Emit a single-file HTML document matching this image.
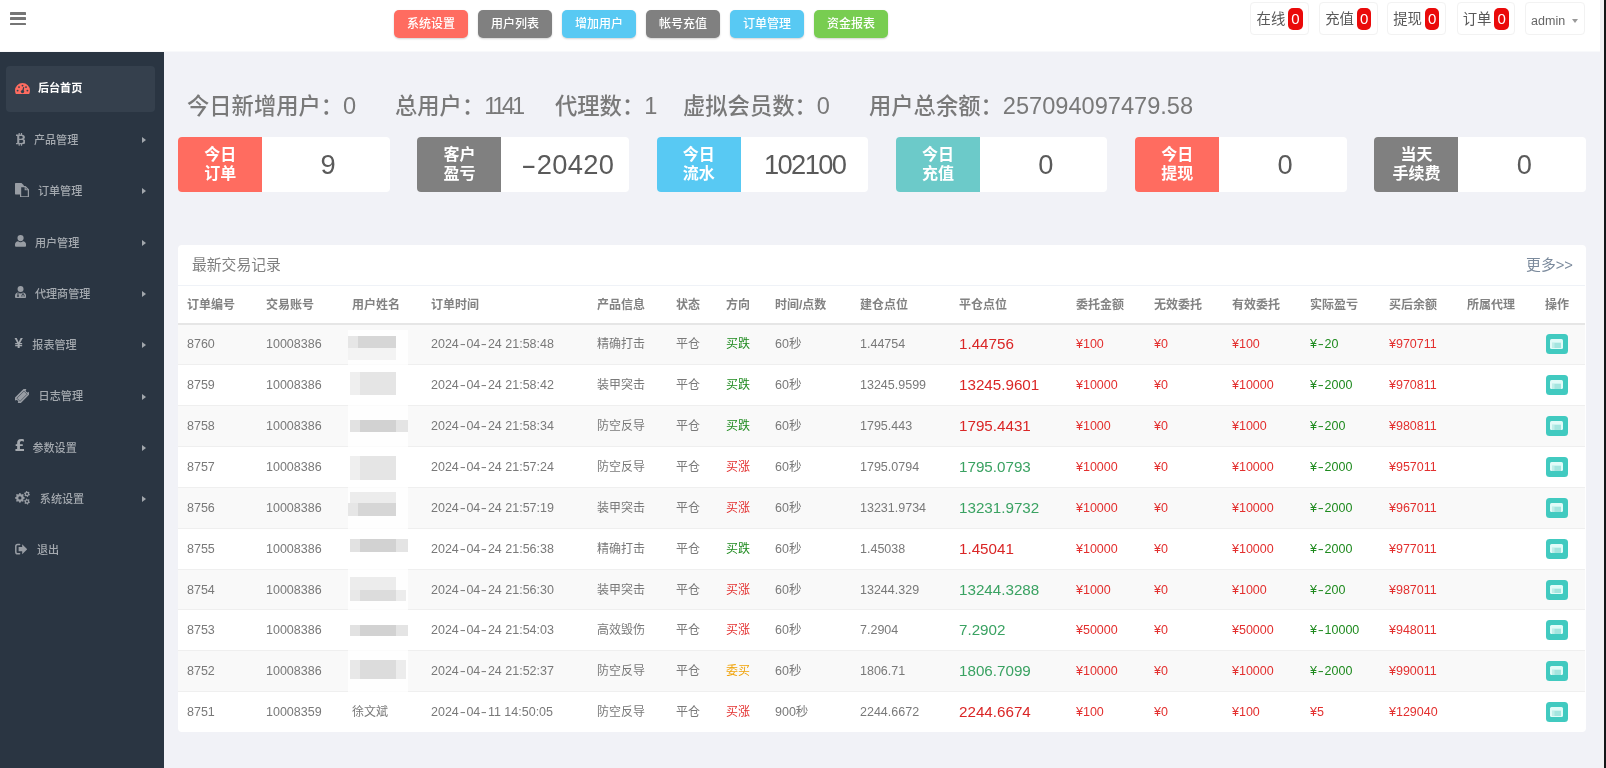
<!DOCTYPE html>
<html lang="zh-CN">
<head>
<meta charset="utf-8">
<title>后台首页</title>
<style>
*{box-sizing:border-box;margin:0;padding:0}
html,body{width:1606px;height:768px;overflow:hidden}
body{position:relative;background:#f1f2f7;font-family:"Liberation Sans","Noto Sans CJK SC",sans-serif;color:#797979;font-size:12px}
#wrap{position:absolute;left:0;top:0;width:1606px;height:768px;will-change:transform;transform:translateZ(0)}
/* header */
#header{position:absolute;left:0;top:0;width:1600px;height:52px;background:linear-gradient(#fff 0,#fff 51px,#f8f9fb 51px,#f8f9fb 52px)}
#burger{position:absolute;left:10.2px;top:12px;width:16px;height:14px}
#burger i{position:absolute;left:0;width:16px;height:2.5px;background:#757575;border-radius:.6px}
.tbtn{position:absolute;top:10px;height:27.5px;width:74.6px;margin-left:.6px;border-radius:5px;color:#fff;font-size:12px;font-weight:500;line-height:28.6px;text-align:center;box-shadow:0 1px 2px rgba(0,0,0,.18)}
.b-red{background:#ff6c60}.b-gray{background:#808080}.b-blue{background:#58c9f3}.b-green{background:#78cd51}.b-teal{background:#6ccac9}
.nbtn{position:absolute;top:2.3px;height:33px;border:1px solid #f2f2f2;border-radius:4px;background:#fff;color:#595959;font-size:14.4px;line-height:32.4px;padding-left:5.2px;white-space:nowrap}
.nbtn b{position:absolute;left:36.9px;top:5.2px;font-weight:normal;background:#ea0a0a;color:#fff;border-radius:5px;width:14.4px;height:21.2px;line-height:21.2px;text-align:center;font-size:15px}
/* sidebar */
#side{position:absolute;left:0;top:52px;width:164px;height:716px;background:#2a3542}
.mia{position:absolute;left:6px;top:13.5px;width:149px;height:46px;border-radius:4px;background:#35404d}
#side svg{position:absolute;display:block}
.mt{position:absolute;margin-top:.4px;height:20px;line-height:20px;font-size:11.1px;color:#a4a9af;white-space:nowrap;font-weight:500}
.mt.act{color:#fff;font-weight:bold}
.cur{position:absolute;height:20px;line-height:20px;font-size:15px;color:#a4a9af;font-weight:bold}
#side em{position:absolute;margin-top:1px;left:141.8px;width:0;height:0;border-left:4px solid #a2a7ad;border-top:3.3px solid transparent;border-bottom:3.3px solid transparent}
/* stats */
.sm{position:absolute;top:89.7px;font-weight:500;font-size:22.3px;line-height:32px;color:#797979;white-space:nowrap}
.sm span{font-size:23.6px}
.st{position:absolute;top:136.7px;width:211.5px;height:55.2px;background:#fff;border-radius:4px;overflow:hidden}
.st .l{position:absolute;left:0;top:0;width:84px;height:55px;color:#fff;font-size:16px;line-height:19px;text-align:center;padding-top:8.5px;font-weight:bold}
.st .v{position:absolute;left:86.5px;top:0;width:127px;height:55px;text-align:center;font-size:27.3px;line-height:55.5px;color:#5a5a5a}
.st .v i{font-style:normal;display:inline-block;width:16px;text-align:center;transform:scaleX(1.7)}
/* panel */
#panel{position:absolute;left:178px;top:245px;width:1408px;height:487px;background:#fff;border-radius:4px;overflow:hidden}
#ptitle{position:absolute;left:14px;top:0;height:40px;line-height:40.6px;font-size:14.8px;color:#808080}
#more{position:absolute;right:13px;top:0;height:40px;line-height:40px;font-size:14.8px;color:#7b8a9c}
table{position:absolute;left:0;top:40px;width:1407px;border-collapse:collapse;table-layout:fixed}
th{height:38px;text-align:left;padding:0 0 0 9px;font-size:12px;color:#828282;font-weight:bold;border-top:1px solid #eff2f7;border-bottom:2px solid #e6e6e6;white-space:nowrap;line-height:14px;padding-top:1.5px}
td{height:41px;line-height:16px;padding:0 0 0 9px;font-size:12.5px;color:#797979;border-top:1px solid #efefef;white-space:nowrap;overflow:visible}
tbody tr:nth-child(odd) td{background:#f9f9f9}
tbody tr:nth-child(7) td{height:40px}
td.big{font-size:15.2px}
td.c{font-size:12px}
td i{font-style:normal;display:inline-block;width:7.6px;text-align:center;transform:scaleX(1.45)}
td.big i{width:9px}
.r{color:#e3302f}.g{color:#1e8a1e}.y{color:#f0a30a}
td.big.g{color:#3aa262}td.big.r{color:#da2626}
.op{display:inline-block;width:22px;height:20px;border-radius:3.5px;background:#41cac0;position:relative;left:.5px;vertical-align:middle}
.op:before{content:"";position:absolute;left:4.7px;top:5px;width:12.4px;height:9.4px;background:#e2fbf8;border-radius:1.5px}
.op:after{content:"";position:absolute;left:6.4px;top:8px;width:9px;height:4.6px;background:#a4e5df;border-top:1px solid #cdf4f0;box-shadow:inset 2.5px 0 0 #c0eee9}
#blur{position:absolute;left:348px;top:330px;width:60px;height:366px;background:rgba(255,255,255,.72);filter:blur(.6px)}
#blur i{position:absolute;display:block}
/* right edge */
#edge1{position:absolute;left:1600px;top:0;width:4px;height:768px;background:#f2f2f3}
#edge2{position:absolute;left:1604px;top:0;width:2px;height:768px;background:#151716}
</style>
</head>
<body>
<div id="wrap">
<div id="header">
  <div id="burger"><i style="top:0"></i><i style="top:5.35px"></i><i style="top:10.7px"></i></div>
  <div class="tbtn b-red" style="left:393px">系统设置</div>
  <div class="tbtn b-gray" style="left:477px">用户列表</div>
  <div class="tbtn b-blue" style="left:561px">增加用户</div>
  <div class="tbtn b-gray" style="left:645px">帐号充值</div>
  <div class="tbtn b-blue" style="left:729px">订单管理</div>
  <div class="tbtn b-green" style="left:813px">资金报表</div>
  <div class="nbtn" style="left:1250.3px;width:58.5px">在线<b>0</b></div>
  <div class="nbtn" style="left:1319px;width:58.9px">充值<b>0</b></div>
  <div class="nbtn" style="left:1387px;width:59.2px">提现<b>0</b></div>
  <div class="nbtn" style="left:1456.5px;width:58.1px">订单<b>0</b></div>
  <div class="nbtn" style="left:1524.9px;width:60.4px;font-size:12.5px;color:#666;line-height:37px">admin<i style="position:absolute;left:46.5px;top:15.8px;border-top:4px solid #999;border-left:3.5px solid transparent;border-right:3.5px solid transparent"></i></div>
</div>

<div id="side">
  <div class="mia"></div>
  <svg style="left:14.7px;top:30.5px" width="15" height="11.6" viewBox="0 0 15 11.6"><path d="M7.5 0A7.5 7.5 0 0 1 15 7.5C15 9 14.6 10.4 13.8 11.6H1.2C.4 10.4 0 9 0 7.5A7.5 7.5 0 0 1 7.5 0Z" fill="#ff6c60"/><g fill="#35404d"><circle cx="2.6" cy="7.6" r=".95"/><circle cx="4" cy="4.1" r=".95"/><circle cx="7.5" cy="2.6" r=".95"/><circle cx="11" cy="4.1" r=".95"/><circle cx="12.4" cy="7.6" r=".95"/><circle cx="7.5" cy="8.6" r="1.7"/><path d="M6.9 8.2L8.3 3.9L9.3 4.2L8.4 8.7Z"/></g></svg><span class="mt act" style="left:37.9px;top:26.0px">后台首页</span>
  <svg style="left:15.6px;top:81.0px" width="9.8" height="12.8" viewBox="0 0 9.8 12.8"><path fill-rule="evenodd" fill="#989da4" d="M0 1.6H2.6V0H3.8V1.6H4.9V0H6.1V1.7C7.9 1.9 8.9 2.8 8.9 4.2C8.9 5.2 8.4 5.9 7.5 6.3C8.9 6.6 9.7 7.5 9.7 8.8C9.7 10.4 8.5 11.2 6.1 11.3V12.8H4.9V11.3H3.8V12.8H2.6V11.3H0V10H1.2V2.9H0ZM3.3 3V5.7H5C6.1 5.7 6.7 5.2 6.7 4.35C6.7 3.5 6.1 3 5 3ZM3.3 7.1V9.9H5.3C6.6 9.9 7.3 9.4 7.3 8.5C7.3 7.6 6.6 7.1 5.3 7.1Z"/></svg><span class="mt" style="left:33.9px;top:77.7px">产品管理</span><em style="top:84.4px"></em>
  <svg style="left:15px;top:130.5px" width="14" height="14.4" viewBox="0 0 14 14.4"><path d="M.6 0H6.5L8.8 2.3V11.4H.6Q0 11.4 0 10.8V.6Q0 0 .6 0Z" fill="#989da4"/><path d="M5.6 3.6H10.4L13.4 6.6V13.8H5.6Z" fill="#2a3542" stroke="#989da4" stroke-width="1.2" stroke-linejoin="round"/><path d="M10.2 3.8V6.8H13.2" fill="none" stroke="#989da4" stroke-width="1.1"/></svg><span class="mt" style="left:37.9px;top:128.7px">订单管理</span><em style="top:135.4px"></em>
  <svg style="left:15.1px;top:183.2px" width="11.1" height="11.7" viewBox="0 0 11.1 11.7"><circle cx="5.55" cy="3.1" r="3.1" fill="#989da4"/><path d="M0 11.7V9.6C0 7.6 1.4 6.5 3.1 6.3C3.8 7 4.6 7.3 5.55 7.3C6.5 7.3 7.3 7 8 6.3C9.7 6.5 11.1 7.6 11.1 9.6V10.7Q11.1 11.7 10.1 11.7H1Q0 11.7 0 10.7Z" fill="#989da4"/></svg><span class="mt" style="left:34.9px;top:180.2px">用户管理</span><em style="top:186.9px"></em>
  <svg style="left:15px;top:234.0px" width="11.1" height="12" viewBox="0 0 11.1 12"><circle cx="5.55" cy="3" r="3" fill="#989da4"/><path transform="translate(0 .3)" d="M0 11.7V9.6C0 7.6 1.4 6.5 3.1 6.3C3.8 7 4.6 7.3 5.55 7.3C6.5 7.3 7.3 7 8 6.3C9.7 6.5 11.1 7.6 11.1 9.6V10.7Q11.1 11.7 10.1 11.7H1Q0 11.7 0 10.7Z" fill="#989da4"/><g fill="none" stroke="#2a3542" stroke-width=".9"><path d="M3 7V9.2"/><circle cx="3" cy="10" r=".7"/><path d="M8 7V8.2M6.9 10.6V9.4Q6.9 8.4 8 8.4Q9.1 8.4 9.1 9.4V10.6"/></g></svg><span class="mt" style="left:34.9px;top:231.7px">代理商管理</span><em style="top:238.4px"></em>
  <b class="cur" style="left:14.6px;top:281.2px">¥</b><span class="mt" style="left:32.3px;top:282.5px">报表管理</span><em style="top:289.2px"></em>
  <svg style="left:15px;top:336.5px" width="14" height="14.4" viewBox="0 0 14 14.4"><g transform="rotate(-45 7 7.2)"><path d="M-1 3.2H15V5.4A1.8 1.8 0 0 0 15 9V11.2H-1V9A1.8 1.8 0 0 0 -1 5.4Z" fill="#989da4"/><rect x="2" y="5" width="10" height="4.4" fill="none" stroke="#2a3542" stroke-opacity=".75" stroke-width=".7"/></g></svg><span class="mt" style="left:38.6px;top:334.0px">日志管理</span><em style="top:340.7px"></em>
  <b class="cur" style="left:14.4px;top:383.9px;font-family:'DejaVu Sans',sans-serif;font-size:15.5px">£</b><span class="mt" style="left:32.4px;top:385.3px">参数设置</span><em style="top:392.0px"></em>
  <svg style="left:14.8px;top:439.3px" width="15" height="13.6" viewBox="0 0 15 13.6"><path fill-rule="evenodd" fill="#989da4" d="M9.78 6.42L9.78 7.38L8.54 8.00L8.25 8.69L8.69 10.01L8.01 10.69L6.69 10.25L6.00 10.54L5.38 11.78L4.42 11.78L3.80 10.54L3.11 10.25L1.79 10.69L1.11 10.01L1.55 8.69L1.26 8.00L0.02 7.38L0.02 6.42L1.26 5.80L1.55 5.11L1.11 3.79L1.79 3.11L3.11 3.55L3.80 3.26L4.42 2.02L5.38 2.02L6.00 3.26L6.69 3.55L8.01 3.11L8.69 3.79L8.25 5.11L8.54 5.80ZM6.50 6.90 A1.60 1.60 0 1 0 3.30 6.90 A1.60 1.60 0 1 0 6.50 6.90 Z"/><path fill-rule="evenodd" fill="#989da4" d="M14.96 3.50L14.73 4.25L13.69 4.40L13.27 4.80L13.04 5.81L12.28 5.99L11.63 5.17L11.08 5.00L10.08 5.31L9.55 4.73L9.94 3.76L9.81 3.20L9.04 2.50L9.27 1.75L10.31 1.60L10.73 1.20L10.96 0.19L11.72 0.01L12.37 0.83L12.92 1.00L13.92 0.69L14.45 1.27L14.06 2.24L14.19 2.80ZM13.00 3.00 A1.00 1.00 0 1 0 11.00 3.00 A1.00 1.00 0 1 0 13.00 3.00 Z"/><path fill-rule="evenodd" fill="#989da4" d="M14.96 11.10L14.73 11.85L13.69 12.00L13.27 12.40L13.04 13.41L12.28 13.59L11.63 12.77L11.08 12.60L10.08 12.91L9.55 12.33L9.94 11.36L9.81 10.80L9.04 10.10L9.27 9.35L10.31 9.20L10.73 8.80L10.96 7.79L11.72 7.61L12.37 8.43L12.92 8.60L13.92 8.29L14.45 8.87L14.06 9.84L14.19 10.40ZM13.00 10.60 A1.00 1.00 0 1 0 11.00 10.60 A1.00 1.00 0 1 0 13.00 10.60 Z"/></svg><span class="mt" style="left:39.8px;top:436.5px">系统设置</span><em style="top:443.2px"></em>
  <svg style="left:15px;top:491.0px" width="12.4" height="12.4" viewBox="0 0 12.4 12.4"><path d="M4.6 1.6H2.6Q.8 1.6 .8 3.4V9Q.8 10.8 2.6 10.8H4.6" fill="none" stroke="#989da4" stroke-width="1.5" stroke-linecap="round"/><path d="M7.2 1.2L12.3 6.2L7.2 11.2V8.3H3.6V4.1H7.2Z" fill="#989da4"/></svg><span class="mt" style="left:37.0px;top:487.6px">退出</span>
</div>

<div class="sm" style="left:187px">今日新增用户：<span>0</span></div>
<div class="sm" style="left:395px">总用户：<span style="letter-spacing:-3.3px">1141</span></div>
<div class="sm" style="left:555px">代理数：<span>1</span></div>
<div class="sm" style="left:683px">虚拟会员数：<span>0</span></div>
<div class="sm" style="left:869px">用户总余额：<span>257094097479.58</span></div>

<div class="st" style="left:178.20px"><div class="l b-red">今日<br>订单</div><div class="v">9</div></div>
<div class="st" style="left:417.45px"><div class="l b-gray">客户<br>盈亏</div><div class="v" style="letter-spacing:.3px"><i>-</i>20420</div></div>
<div class="st" style="left:656.70px"><div class="l b-blue">今日<br>流水</div><div class="v" style="letter-spacing:-1.6px;left:84.5px">102100</div></div>
<div class="st" style="left:895.95px"><div class="l b-teal">今日<br>充值</div><div class="v">0</div></div>
<div class="st" style="left:1135.20px"><div class="l b-red">今日<br>提现</div><div class="v">0</div></div>
<div class="st" style="left:1374.45px"><div class="l b-gray">当天<br>手续费</div><div class="v">0</div></div>

<div id="panel">
  <div id="ptitle">最新交易记录</div>
  <div id="more">更多&gt;&gt;</div>
  <table>
    <colgroup><col style="width:79px"><col style="width:86px"><col style="width:79px"><col style="width:166px"><col style="width:79px"><col style="width:50px"><col style="width:49px"><col style="width:85px"><col style="width:99px"><col style="width:117px"><col style="width:78px"><col style="width:78px"><col style="width:78px"><col style="width:79px"><col style="width:78px"><col style="width:78px"><col style="width:49px"></colgroup>
    <thead><tr><th>订单编号</th><th>交易账号</th><th>用户姓名</th><th>订单时间</th><th>产品信息</th><th>状态</th><th>方向</th><th>时间/点数</th><th>建仓点位</th><th>平仓点位</th><th>委托金额</th><th>无效委托</th><th>有效委托</th><th>实际盈亏</th><th>买后余额</th><th>所属代理</th><th>操作</th></tr></thead>
    <tbody>
    <tr><td>8760</td><td>10008386</td><td></td><td>2024<i>-</i>04<i>-</i>24 21:58:48</td><td class="c">精确打击</td><td class="c">平仓</td><td class="c g">买跌</td><td>60秒</td><td>1.44754</td><td class="big r">1.44756</td><td class="r">¥100</td><td class="r">¥0</td><td class="r">¥100</td><td class="g">¥<i>-</i>20</td><td class="r">¥970711</td><td></td><td><span class="op"></span></td></tr>
    <tr><td>8759</td><td>10008386</td><td></td><td>2024<i>-</i>04<i>-</i>24 21:58:42</td><td class="c">装甲突击</td><td class="c">平仓</td><td class="c g">买跌</td><td>60秒</td><td>13245.9599</td><td class="big r">13245.9601</td><td class="r">¥10000</td><td class="r">¥0</td><td class="r">¥10000</td><td class="g">¥<i>-</i>2000</td><td class="r">¥970811</td><td></td><td><span class="op"></span></td></tr>
    <tr><td>8758</td><td>10008386</td><td></td><td>2024<i>-</i>04<i>-</i>24 21:58:34</td><td class="c">防空反导</td><td class="c">平仓</td><td class="c g">买跌</td><td>60秒</td><td>1795.443</td><td class="big r">1795.4431</td><td class="r">¥1000</td><td class="r">¥0</td><td class="r">¥1000</td><td class="g">¥<i>-</i>200</td><td class="r">¥980811</td><td></td><td><span class="op"></span></td></tr>
    <tr><td>8757</td><td>10008386</td><td></td><td>2024<i>-</i>04<i>-</i>24 21:57:24</td><td class="c">防空反导</td><td class="c">平仓</td><td class="c r">买涨</td><td>60秒</td><td>1795.0794</td><td class="big g">1795.0793</td><td class="r">¥10000</td><td class="r">¥0</td><td class="r">¥10000</td><td class="g">¥<i>-</i>2000</td><td class="r">¥957011</td><td></td><td><span class="op"></span></td></tr>
    <tr><td>8756</td><td>10008386</td><td></td><td>2024<i>-</i>04<i>-</i>24 21:57:19</td><td class="c">装甲突击</td><td class="c">平仓</td><td class="c r">买涨</td><td>60秒</td><td>13231.9734</td><td class="big g">13231.9732</td><td class="r">¥10000</td><td class="r">¥0</td><td class="r">¥10000</td><td class="g">¥<i>-</i>2000</td><td class="r">¥967011</td><td></td><td><span class="op"></span></td></tr>
    <tr><td>8755</td><td>10008386</td><td></td><td>2024<i>-</i>04<i>-</i>24 21:56:38</td><td class="c">精确打击</td><td class="c">平仓</td><td class="c g">买跌</td><td>60秒</td><td>1.45038</td><td class="big r">1.45041</td><td class="r">¥10000</td><td class="r">¥0</td><td class="r">¥10000</td><td class="g">¥<i>-</i>2000</td><td class="r">¥977011</td><td></td><td><span class="op"></span></td></tr>
    <tr><td>8754</td><td>10008386</td><td></td><td>2024<i>-</i>04<i>-</i>24 21:56:30</td><td class="c">装甲突击</td><td class="c">平仓</td><td class="c r">买涨</td><td>60秒</td><td>13244.329</td><td class="big g">13244.3288</td><td class="r">¥1000</td><td class="r">¥0</td><td class="r">¥1000</td><td class="g">¥<i>-</i>200</td><td class="r">¥987011</td><td></td><td><span class="op"></span></td></tr>
    <tr><td>8753</td><td>10008386</td><td></td><td>2024<i>-</i>04<i>-</i>24 21:54:03</td><td class="c">高效毁伤</td><td class="c">平仓</td><td class="c r">买涨</td><td>60秒</td><td>7.2904</td><td class="big g">7.2902</td><td class="r">¥50000</td><td class="r">¥0</td><td class="r">¥50000</td><td class="g">¥<i>-</i>10000</td><td class="r">¥948011</td><td></td><td><span class="op"></span></td></tr>
    <tr><td>8752</td><td>10008386</td><td></td><td>2024<i>-</i>04<i>-</i>24 21:52:37</td><td class="c">防空反导</td><td class="c">平仓</td><td class="c y">委买</td><td>60秒</td><td>1806.71</td><td class="big g">1806.7099</td><td class="r">¥10000</td><td class="r">¥0</td><td class="r">¥10000</td><td class="g">¥<i>-</i>2000</td><td class="r">¥990011</td><td></td><td><span class="op"></span></td></tr>
    <tr><td>8751</td><td>10008359</td><td class="c">徐文斌</td><td>2024<i>-</i>04<i>-</i>11 14:50:05</td><td class="c">防空反导</td><td class="c">平仓</td><td class="c r">买涨</td><td>900秒</td><td>2244.6672</td><td class="big r">2244.6674</td><td class="r">¥100</td><td class="r">¥0</td><td class="r">¥100</td><td class="r">¥5</td><td class="r">¥129040</td><td></td><td><span class="op"></span></td></tr>
    </tbody>
  </table>
</div>

<div id="blur"><i style="left:0;top:6px;width:10px;height:12px;background:#e6e6e6"></i><i style="left:10px;top:6px;width:38px;height:12px;background:#d6d6d6"></i><i style="left:0;top:18px;width:48px;height:12px;background:#f3f3f3"></i><i style="left:2px;top:42px;width:10px;height:23px;background:#efefef"></i><i style="left:12px;top:42px;width:36px;height:23px;background:#e5e5e5"></i><i style="left:2px;top:90px;width:10px;height:12px;background:#e2e2e2"></i><i style="left:12px;top:90px;width:36px;height:12px;background:#d2d2d2"></i><i style="left:48px;top:90px;width:12px;height:12px;background:#e4e4e4"></i><i style="left:2px;top:126px;width:10px;height:24px;background:#efefef"></i><i style="left:12px;top:126px;width:36px;height:24px;background:#e5e5e5"></i><i style="left:2px;top:162px;width:46px;height:11px;background:#ececec"></i><i style="left:0;top:173px;width:10px;height:13px;background:#e6e6e6"></i><i style="left:10px;top:173px;width:38px;height:13px;background:#d6d6d6"></i><i style="left:2px;top:209px;width:10px;height:13px;background:#e2e2e2"></i><i style="left:12px;top:209px;width:36px;height:13px;background:#d2d2d2"></i><i style="left:48px;top:209px;width:12px;height:13px;background:#e4e4e4"></i><i style="left:2px;top:247px;width:46px;height:13px;background:#ececec"></i><i style="left:2px;top:260px;width:10px;height:11px;background:#e8e8e8"></i><i style="left:12px;top:260px;width:36px;height:11px;background:#dcdcdc"></i><i style="left:48px;top:260px;width:10px;height:11px;background:#ececec"></i><i style="left:2px;top:295px;width:10px;height:11px;background:#e2e2e2"></i><i style="left:12px;top:295px;width:36px;height:11px;background:#d2d2d2"></i><i style="left:48px;top:295px;width:12px;height:11px;background:#e4e4e4"></i><i style="left:2px;top:330px;width:10px;height:19px;background:#e8e8e8"></i><i style="left:12px;top:330px;width:36px;height:19px;background:#dcdcdc"></i><i style="left:48px;top:330px;width:10px;height:19px;background:#ececec"></i></div>
<div id="edge1"></div><div id="edge2"></div>
</div>
</body>
</html>
